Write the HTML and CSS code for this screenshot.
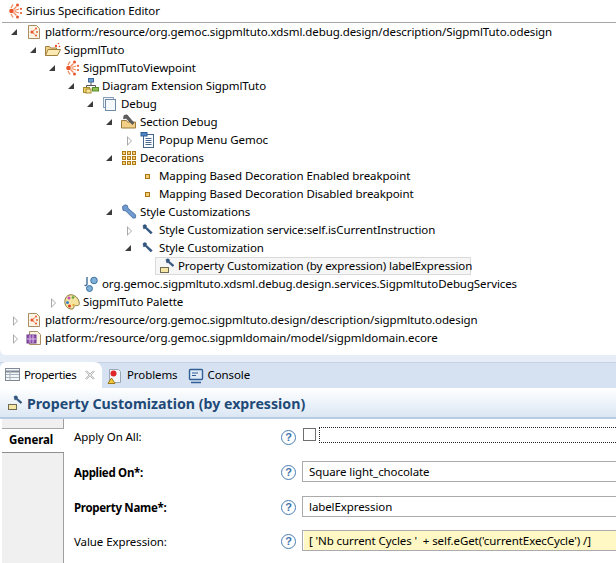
FILE: index.html
```html
<!DOCTYPE html>
<html lang="en">
<head>
    <meta charset="UTF-8">
    <title>Sirius Specification Editor</title>
    <link rel="stylesheet" href="styles.css">
</head>
<body>
    <svg class="sprite" width="0" height="0">
        <symbol id="i-sirius" viewBox="0 0 16 16">
            <g fill="#e8552a"><circle cx="4.500" cy="8" r="2.300"/><circle cx="10.500" cy="2" r="1.500"/><circle cx="14" cy="5.800" r="1.100"/><circle cx="14" cy="10" r="1.100"/><circle cx="10.500" cy="14" r="1.500"/></g>
            <path d="M6.500 6.500 9.500 3.500M7.500 7.500 12 6M7.500 8.500 12 10M6.500 9.500 9.500 12.500M4 5 6 1.500M4 11 6 14.500" stroke="#f08a5c" stroke-width="1.300" fill="none"/>
        </symbol>
        <symbol id="i-file" viewBox="0 0 16 16">
            <path d="M2.500 1.500h8l3 3v10h-11z" fill="#fbf3e4" stroke="#a98e62"/>
            <g fill="#e8552a"><circle cx="6" cy="8" r="1.600"/><circle cx="10" cy="4.500" r="1"/><circle cx="11" cy="8" r=".9"/><circle cx="10" cy="11.500" r="1"/></g>
            <path d="M7 7 9 5.500M7 9 9 10.500" stroke="#f08a5c"/>
        </symbol>
        <symbol id="i-folder" viewBox="0 0 16 16">
            <path d="M.5 13.500v-9h4l1 1.500h6v7.500z" fill="#f2d48c" stroke="#a17f3c"/>
            <path d="M.5 13.500 3 7.500h12.500l-3 6z" fill="#fbe9b4" stroke="#a17f3c"/>
            <g fill="#e8552a"><circle cx="11" cy="4" r="1.200"/><circle cx="13.500" cy="1.500" r=".8"/><circle cx="14.500" cy="4.500" r=".8"/></g>
        </symbol>
        <symbol id="i-diagram" viewBox="0 0 16 16">
            <path d="M8 4v3M3.500 10V7.500h9V10" stroke="#555" fill="none"/>
            <rect x="5.500" y=".5" width="5" height="3.500" fill="#6f9fd0" stroke="#3d6a9a"/>
            <rect x="9.500" y="9.500" width="6" height="3.500" fill="#8cc152" stroke="#5b8a2c"/>
            <rect x=".5" y="9.500" width="6" height="5" fill="#f3d36a" stroke="#a58a2c"/>
            <rect x="3" y="11" width="5" height="4" fill="#f7e39a" stroke="#a58a2c"/>
        </symbol>
        <symbol id="i-layer" viewBox="0 0 16 16">
            <rect x="1.500" y="1.500" width="10" height="10" fill="#eef3f9" stroke="#8aa0b8"/>
            <rect x="3.500" y="3.500" width="10" height="11" fill="#f6f9fc" stroke="#6f8aa6"/>
        </symbol>
        <symbol id="i-section" viewBox="0 0 16 16">
            <path d="M.5 14V6.500h5l1 1.500h8v6z" fill="#f2cf86" stroke="#9a7a3a"/>
            <path d="M3 1.500 6 .8 13 9l-1.600 1.500L5 4.300 2.500 4.800z" fill="#5f5f5f" stroke="#3f3f3f" stroke-width=".6"/>
        </symbol>
        <symbol id="i-menu" viewBox="0 0 16 16">
            <rect x="3.500" y="2.500" width="10" height="13" fill="#fbfcfe" stroke="#46658a"/>
            <rect x="1" y=".5" width="6" height="3.500" fill="#4f86c6" stroke="#2f5f96"/>
            <path d="M5.500 6.500h6M5.500 8.500h6M5.500 10.500h6M5.500 12.500h6" stroke="#4a6a90"/>
        </symbol>
        <symbol id="i-deco" viewBox="0 0 16 16">
            <g fill="#f6d27a" stroke="#b07a16">
                <rect x="1.500" y="1.500" width="3" height="3"/><rect x="6.500" y="1.500" width="3" height="3"/><rect x="11.500" y="1.500" width="3" height="3"/>
                <rect x="1.500" y="6.500" width="3" height="3"/><rect x="6.500" y="6.500" width="3" height="3"/><rect x="11.500" y="6.500" width="3" height="3"/>
                <rect x="1.500" y="11.500" width="3" height="3"/><rect x="6.500" y="11.500" width="3" height="3"/><rect x="11.500" y="11.500" width="3" height="3"/>
            </g>
        </symbol>
        <symbol id="i-bullet" viewBox="0 0 16 16">
            <rect x="5.500" y="6.500" width="4" height="4" fill="#f5cf72" stroke="#a8741a"/>
        </symbol>
        <symbol id="i-wrench" viewBox="0 0 16 16">
            <path d="M1.500 2.500 4 .8l2.400.8.6 2.600 7.600 6.600v3l-2.600.4L4.800 7 2 6.300z" fill="#6f9ad0" stroke="#41689a" stroke-width=".8"/>
        </symbol>
        <symbol id="i-wrench-s" viewBox="0 0 16 16">
            <path d="M3 3.500 5 2.500l1.500 1-.2 1.500 6 5.500-1.500 1.500-5.500-5.500-1.800.2z" fill="#2f5580" stroke="#25466c" stroke-width=".5"/>
        </symbol>
        <symbol id="i-prop" viewBox="0 0 16 16">
            <rect x="1.500" y="9.500" width="8" height="5" fill="#f6e6a6" stroke="#6f6a50"/>
            <path d="M7 1.500 9 .8l1.500 1-.2 1.500 4.700 4-1.300 1.300-4.500-4-1.500.2z" fill="#2f5580" stroke="#25466c" stroke-width=".5"/>
        </symbol>
        <symbol id="i-java" viewBox="0 0 16 16">
            <path d="M4 1v7c0 1.500-1.200 2-2.500 1.200" fill="none" stroke="#3e6f9e" stroke-width="1.400"/>
            <circle cx="11" cy="4.500" r="3.300" fill="#7fb0d8" stroke="#3e6f9e"/>
            <circle cx="6.500" cy="12.500" r="3" fill="#7fb0d8" stroke="#3e6f9e"/>
        </symbol>
        <symbol id="i-palette" viewBox="0 0 16 16">
            <path d="M6 .8c4.500-.6 9 3.500 9.300 8.500.2 3-3 2-4.500 2.500-1.500.6-.3 3.300-3 3.300C3 15 .8 11 .8 7.500.8 4 3 1.200 6 .8z" fill="#f5e3a0" stroke="#8a7a3c"/>
            <circle cx="5" cy="4" r="1.500" fill="#c24fc0"/><circle cx="9" cy="3.500" r="1.300" fill="#58a83a"/>
            <circle cx="3.500" cy="8.500" r="1.500" fill="#3a7fd0"/><circle cx="5.500" cy="12" r="1.500" fill="#e03a2a"/><circle cx="9.500" cy="11" r="1.100" fill="#e8a020"/>
        </symbol>
        <symbol id="i-ecore" viewBox="0 0 16 16">
            <path d="M3.500 1.500h8l3 3v10h-11z" fill="#fbf3e4" stroke="#a98e62"/>
            <rect x="1" y="5" width="9" height="8" fill="#8f4fb0" stroke="#6a3a88"/>
            <path d="M4 5v8M7 5v8M1 9h9" stroke="#d9bfe6"/>
        </symbol>
        <symbol id="i-table" viewBox="0 0 16 16">
            <rect x=".5" y="1.500" width="14" height="12" fill="#f4f6f8" stroke="#7f8a96"/>
            <path d="M.5 4.500h14" stroke="#7f8a96" stroke-width="2"/>
            <path d="M5 4v9M1 7.500h13M1 10.500h13" stroke="#a8b2bc"/>
        </symbol>
        <symbol id="i-close" viewBox="0 0 12 12">
            <path d="M2 1 6 5l4-4 1 1-4 4 4 4-1 1-4-4-4 4-1-1 4-4-4-4z" fill="#fff" stroke="#8a8a8a" stroke-width=".8"/>
        </symbol>
        <symbol id="i-problems" viewBox="0 0 16 16">
            <path d="M2.500 1.500h9l2 2v11h-11z" fill="#f3f6fa" stroke="#9aa6b2"/>
            <circle cx="6.500" cy="5.500" r="3" fill="#e0252a"/>
            <path d="M4.500 10 8 15.500H1z" fill="#f5c83c" stroke="#9a7a1c"/>
        </symbol>
        <symbol id="i-console" viewBox="0 0 16 16">
            <rect x="1.500" y="1.500" width="13" height="10" rx="1" fill="#dfeaf6" stroke="#2f5f96" stroke-width="1.400"/>
            <path d="M4 5h6M4 7.500h4" stroke="#2f5f96"/>
            <path d="M3 14.500h10" stroke="#2f5f96" stroke-width="1.500"/>
        </symbol>
    </svg>

    <header class="editor-title">
        <svg class="ico"><use href="#i-sirius"/></svg>
        <span>Sirius Specification Editor</span>
    </header>

    <div class="tree-pane">
        <ul class="tree">
            <li class="row lvl0"><i class="tw open"></i><svg class="ico"><use href="#i-file"/></svg><span>platform:/resource/org.gemoc.sigpmltuto.xdsml.debug.design/description/SigpmlTuto.odesign</span></li>
            <li class="row lvl1"><i class="tw open"></i><svg class="ico"><use href="#i-folder"/></svg><span>SigpmlTuto</span></li>
            <li class="row lvl2"><i class="tw open"></i><svg class="ico"><use href="#i-sirius"/></svg><span>SigpmlTutoViewpoint</span></li>
            <li class="row lvl3"><i class="tw open"></i><svg class="ico"><use href="#i-diagram"/></svg><span>Diagram Extension SigpmlTuto</span></li>
            <li class="row lvl4"><i class="tw open"></i><svg class="ico"><use href="#i-layer"/></svg><span>Debug</span></li>
            <li class="row lvl5"><i class="tw open"></i><svg class="ico"><use href="#i-section"/></svg><span>Section Debug</span></li>
            <li class="row lvl6"><i class="tw shut"></i><svg class="ico"><use href="#i-menu"/></svg><span>Popup Menu Gemoc</span></li>
            <li class="row lvl5"><i class="tw open"></i><svg class="ico"><use href="#i-deco"/></svg><span>Decorations</span></li>
            <li class="row lvl6"><i class="tw"></i><svg class="ico"><use href="#i-bullet"/></svg><span>Mapping Based Decoration Enabled breakpoint</span></li>
            <li class="row lvl6"><i class="tw"></i><svg class="ico"><use href="#i-bullet"/></svg><span>Mapping Based Decoration Disabled breakpoint</span></li>
            <li class="row lvl5"><i class="tw open"></i><svg class="ico"><use href="#i-wrench"/></svg><span>Style Customizations</span></li>
            <li class="row lvl6"><i class="tw shut"></i><svg class="ico"><use href="#i-wrench-s"/></svg><span>Style Customization service:self.isCurrentInstruction</span></li>
            <li class="row lvl6"><i class="tw open"></i><svg class="ico"><use href="#i-wrench-s"/></svg><span>Style Customization</span></li>
            <li class="row lvl7 selected"><svg class="ico"><use href="#i-prop"/></svg><span>Property Customization (by expression) labelExpression</span></li>
            <li class="row lvl3"><i class="tw"></i><svg class="ico"><use href="#i-java"/></svg><span>org.gemoc.sigpmltuto.xdsml.debug.design.services.SigpmltutoDebugServices</span></li>
            <li class="row lvl2"><i class="tw shut"></i><svg class="ico"><use href="#i-palette"/></svg><span>SigpmlTuto Palette</span></li>
            <li class="row lvl0"><i class="tw shut"></i><svg class="ico"><use href="#i-file"/></svg><span>platform:/resource/org.gemoc.sigpmltuto.design/description/sigpmltuto.odesign</span></li>
            <li class="row lvl0"><i class="tw shut"></i><svg class="ico"><use href="#i-ecore"/></svg><span>platform:/resource/org.gemoc.sigpmldomain/model/sigpmldomain.ecore</span></li>
        </ul>
        <div class="sash"></div>
    </div>

    <nav class="view-tabs">
        <div class="view-tab active">
            <svg class="ico"><use href="#i-table"/></svg><span>Properties</span>
            <svg class="close"><use href="#i-close"/></svg>
        </div>
        <div class="view-tab"><svg class="ico"><use href="#i-problems"/></svg><span>Problems</span></div>
        <div class="view-tab"><svg class="ico"><use href="#i-console"/></svg><span>Console</span></div>
    </nav>

    <h2 class="form-title">
        <svg class="ico"><use href="#i-prop"/></svg>
        <span>Property Customization (by expression)</span>
    </h2>

    <section class="props">
        <aside class="side-tabs">
            <div class="side-gap"></div>
            <div class="side-tab">General</div>
        </aside>
        <form class="fields">
            <div class="field check-row">
                <label>Apply On All:</label>
                <span class="help">?</span>
                <span class="checkbox"></span>
                <span class="focus-box"></span>
            </div>
            <div class="field">
                <label class="req">Applied On*:</label>
                <span class="help">?</span>
                <div class="input">Square light_chocolate</div>
            </div>
            <div class="field">
                <label class="req">Property Name*:</label>
                <span class="help">?</span>
                <div class="input">labelExpression</div>
            </div>
            <div class="field">
                <label>Value Expression:</label>
                <span class="help">?</span>
                <div class="input expr">[ 'Nb current Cycles '  + self.eGet('currentExecCycle') /]</div>
            </div>
        </form>
    </section>
</body>
</html>
```

FILE: styles.css
```css
/* General Reset */
* {
    margin: 0;
    padding: 0;
    box-sizing: border-box;
}

html, body {
    height: 563px;
    overflow: hidden;
}

body {
    font-family: "Noto Sans", "Open Sans", Arial, sans-serif;
    font-size: 11.5px;
    letter-spacing: -0.09px;
    color: #000;
    background: #fff;
}

.sprite {
    position: absolute;
}

.ico {
    width: 16px;
    height: 16px;
    flex: none;
}

/* Editor title */
.editor-title {
    display: flex;
    align-items: center;
    gap: 3px;
    height: 23px;
    padding-left: 5px;
    margin-left: 2px;
    border-bottom: 1px solid #a6a6a6;
}

.editor-title span {
    padding-bottom: 2px;
}

/* Tree */
.tree-pane {
    background: #e7edf7;
}

.tree {
    list-style: none;
    height: 332px;
    background: #fff;
    border-radius: 0 0 0 6px;
}

.row {
    display: flex;
    align-items: center;
    height: 18px;
    white-space: nowrap;
}

.row span {
    padding-bottom: 2px;
}

.row .ico {
    margin-right: 3px;
}

.tw {
    width: 18px;
    height: 18px;
    flex: none;
    position: relative;
}

.tw.open::after {
    content: "";
    position: absolute;
    left: 3px;
    top: 6px;
    border-style: solid;
    border-width: 0 0 6px 6px;
    border-color: transparent transparent #3c3c3c transparent;
}

.tw.shut::before,
.tw.shut::after {
    content: "";
    position: absolute;
    width: 0;
    height: 0;
    border-style: solid;
}

.tw.shut::before {
    left: 5px;
    top: 5px;
    border-width: 5px 0 5px 5px;
    border-color: transparent transparent transparent #a8a8a8;
}

.tw.shut::after {
    left: 6px;
    top: 7px;
    border-width: 3px 0 3px 3px;
    border-color: transparent transparent transparent #fff;
}

.lvl0 { padding-left: 8px; }
.lvl1 { padding-left: 27px; }
.lvl2 { padding-left: 46px; }
.lvl3 { padding-left: 65px; }
.lvl4 { padding-left: 84px; }
.lvl5 { padding-left: 103px; }
.lvl6 { padding-left: 122px; }

.lvl7 {
    margin-left: 155px;
    width: 316px;
    padding-left: 3px;
}

.selected {
    background: #f6f6f6;
    border: 1px solid #dadada;
}

/* Sash between tree and views */
.sash {
    height: 7px;
}

/* View tabs */
.view-tabs {
    display: flex;
    height: 26px;
    background: #d6e2f1;
    border-top: 1px solid #c5d3e6;
}

.view-tab {
    display: flex;
    align-items: center;
    gap: 4px;
    padding: 0 5px;
}

.view-tab span {
    padding-bottom: 2px;
}

.view-tab.active {
    width: 102px;
    padding-right: 0;
    gap: 3px;
    letter-spacing: -0.35px;
    background: #fff;
    border-radius: 6px 8px 0 0;
    margin-top: -1px;
}

.view-tab .close {
    width: 10px;
    height: 10px;
    margin-left: 6px;
}

/* Form heading */
.form-title {
    display: flex;
    align-items: center;
    gap: 4px;
    height: 31px;
    padding: 1px 0 0 7px;
    font-size: 14.2px;
    font-weight: 700;
    letter-spacing: 0;
    color: #1f4a78;
    background: linear-gradient(#ffffff, #dbe7f4);
    border-bottom: 2px solid #b7cbe2;
}

/* Properties */
.props {
    display: flex;
    height: 145px;
}

.side-tabs {
    width: 64px;
    flex: none;
    padding-left: 2px;
    background: #f0f0f0;
    border-right: 1px solid #9f9f9f;
    box-shadow: inset 2px 0 0 #fff;
}

.side-gap {
    height: 10px;
    border-bottom: 1px solid #a8a8a8;
}

.side-tab {
    height: 24px;
    margin-right: -1px;
    padding: 3px 0 0 7px;
    font-weight: 700;
    background: #fff;
    border-bottom: 1px solid #8f8f8f;
    position: relative;
}

.fields {
    flex: 1;
    display: flex;
    flex-direction: column;
    padding: 5px 0 0 10px;
    overflow: hidden;
}

.field {
    display: flex;
    align-items: center;
    height: 21px;
    margin-bottom: 14px;
    white-space: pre;
}

.check-row {
    margin-bottom: 16px;
}

.field:nth-child(3) {
    margin-bottom: 13px;
}

.field label {
    width: 207px;
    flex: none;
    padding-top: 2px;
}

.check-row label {
    padding-top: 3px;
}

.field .req {
    font-weight: 700;
    letter-spacing: -0.3px;
}

.help {
    width: 15px;
    height: 15px;
    flex: none;
    margin: 1px 6px 0 0;
    border: 1.5px solid #4a7db2;
    border-radius: 50%;
    background: #fff;
    color: #3f73aa;
    font-family: "Liberation Sans", sans-serif;
    font-size: 11px;
    font-weight: 700;
    line-height: 12px;
    text-align: center;
}

.check-row .help {
    margin-top: 6px;
}

.checkbox {
    width: 13px;
    height: 13px;
    flex: none;
    margin-left: 1px;
    background: #fff;
    border: 1px solid #707070;
}

.focus-box {
    flex: 1;
    height: 16px;
    margin-left: 3px;
    border: 1px dotted #222;
    border-right: none;
}

.input {
    flex: 1;
    height: 21px;
    padding: 2px 0 0 6px;
    border: 1px solid #ababab;
    border-right: none;
    background: #fff;
}

.input.expr {
    background: #fff8c4;
    box-shadow: inset 1px 0 0 #fff;
}
```
